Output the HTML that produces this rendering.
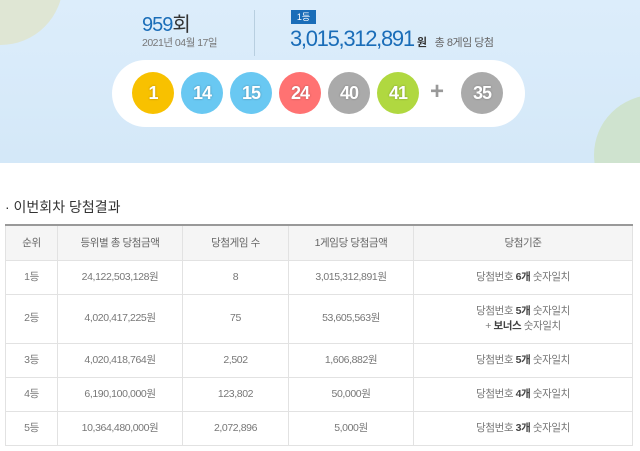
<!DOCTYPE html>
<html><head><meta charset="utf-8"><style>
*{margin:0;padding:0;box-sizing:border-box}
body{width:640px;height:451px;overflow:hidden;background:#fff;font-family:"Liberation Sans","Noto Sans CJK KR",sans-serif;position:relative}
.top{position:absolute;left:0;top:0;width:640px;height:163px;background:linear-gradient(#dcedfb,#d4e8f8);overflow:hidden}
.c1{position:absolute;left:-62px;top:-80px;width:125px;height:125px;border-radius:50%;background:#dfe6d4}
.c2{position:absolute;left:594px;top:95px;width:120px;height:120px;border-radius:50%;background:#cfe3cf}
.abs{position:absolute;white-space:nowrap}
.pill{position:absolute;left:112px;top:60px;width:413px;height:67px;border-radius:34px;background:#fff}
.ball{position:absolute;top:72px;width:42px;height:42px;border-radius:50%;color:#fff;font-weight:bold;font-size:18px;line-height:42px;text-align:center;letter-spacing:-1px;text-shadow:0 0 2px rgba(0,0,0,.3)}
table{position:absolute;left:5px;top:224px;width:628px;border-collapse:collapse;border-top:2px solid #999;font-size:10.5px;color:#777;letter-spacing:-0.4px}
td,th{border:1px solid #e2e2e2;text-align:center;font-weight:normal}
th{background:#f5f5f5;color:#666;height:35px}
td{height:34px;line-height:15px}
b{color:#444}
</style></head><body>
<div class="top"><div class="c1"></div><div class="c2"></div>
<div class="abs" style="left:142px;top:8px;font-size:20px;color:#1a6db8;letter-spacing:-1px">959<span style="color:#333">회</span></div>
<div class="abs" style="left:142px;top:35px;font-size:10.5px;color:#777;letter-spacing:-0.5px">2021년 04월 17일</div>
<div class="abs" style="left:254px;top:10px;width:1px;height:46px;background:#b8cfe0"></div>
<div class="abs" style="left:291px;top:10px;width:25px;height:14px;background:#1a6db8;color:#fff;font-size:9px;line-height:14px;text-align:center">1등</div>
<div class="abs" style="left:290px;top:26px;font-size:22px;color:#1a6db8;letter-spacing:-1.3px">3,015,312,891<span style="font-size:11px;color:#333;font-weight:bold;letter-spacing:0"> 원</span><span style="font-size:11px;color:#666;letter-spacing:-0.5px"> &nbsp; 총 8게임 당첨</span></div>
<div class="pill"></div>
<div class="ball" style="left:132px;background:#f8c100">1</div>
<div class="ball" style="left:181px;background:#69c8f2">14</div>
<div class="ball" style="left:230px;background:#69c8f2">15</div>
<div class="ball" style="left:279px;background:#ff7272">24</div>
<div class="ball" style="left:328px;background:#aaa">40</div>
<div class="ball" style="left:377px;background:#b0d840">41</div>
<div class="abs" style="left:430px;top:78px;font-size:24px;color:#999;font-weight:bold">+</div>
<div class="ball" style="left:461px;background:#aaa">35</div>
</div>
<div class="abs" style="left:5px;top:197px;font-size:14px;color:#333">· 이번회차 당첨결과</div>
<table>
<tr><th style="width:52px">순위</th><th style="width:125px">등위별 총 당첨금액</th><th style="width:106px">당첨게임 수</th><th style="width:125px">1게임당 당첨금액</th><th>당첨기준</th></tr>
<tr><td>1등</td><td>24,122,503,128원</td><td>8</td><td>3,015,312,891원</td><td>당첨번호 <b>6개</b> 숫자일치</td></tr>
<tr><td style="height:49px">2등</td><td>4,020,417,225원</td><td>75</td><td>53,605,563원</td><td>당첨번호 <b>5개</b> 숫자일치<br>+ <b>보너스</b> 숫자일치</td></tr>
<tr><td>3등</td><td>4,020,418,764원</td><td>2,502</td><td>1,606,882원</td><td>당첨번호 <b>5개</b> 숫자일치</td></tr>
<tr><td>4등</td><td>6,190,100,000원</td><td>123,802</td><td>50,000원</td><td>당첨번호 <b>4개</b> 숫자일치</td></tr>
<tr><td>5등</td><td>10,364,480,000원</td><td>2,072,896</td><td>5,000원</td><td>당첨번호 <b>3개</b> 숫자일치</td></tr>
</table>
</body></html>
